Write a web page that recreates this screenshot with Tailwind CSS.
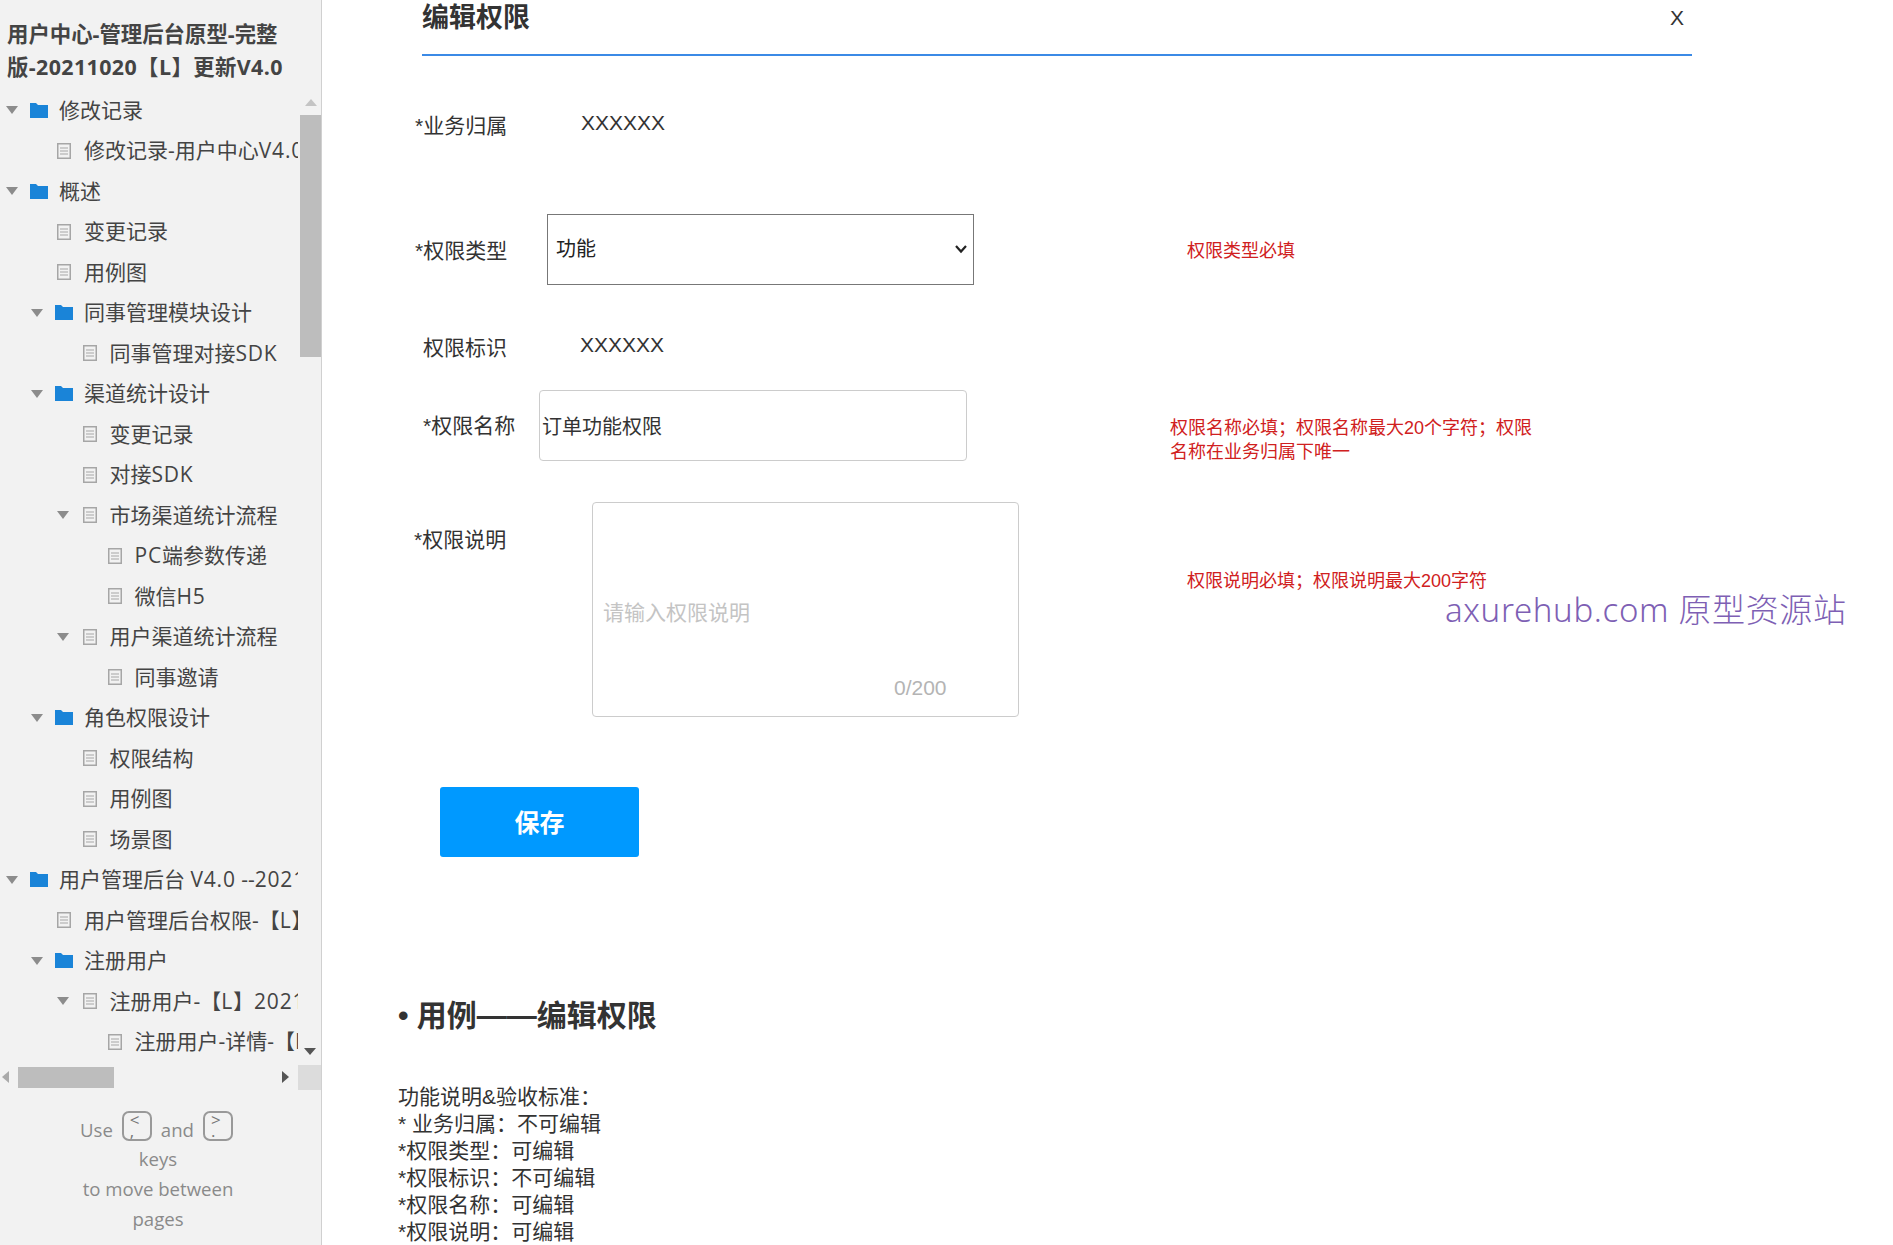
<!DOCTYPE html>
<html lang="en">
<head>
    <meta charset="UTF-8">
    <title>编辑权限</title>
    <script src="https://cdn.jsdelivr.net/npm/@tailwindcss/browser@4"></script>
</head>
<body class="bg-white text-[#333] overflow-hidden font-['Liberation_Sans','Noto_Sans_CJK_SC',sans-serif]">
<div class="flex h-[1245px] w-[1893px] overflow-hidden relative">

    <!-- Sidebar -->
    <aside class="w-[322px] shrink-0 bg-[#f2f2f2] border-r border-[#d0d0d0] font-['Open_Sans','Noto_Sans_CJK_SC',sans-serif]">
        <div class="h-[90px] pt-[17px] pl-[7px] text-[21.4px] leading-[33px] font-bold text-[#444]">
            <div class="whitespace-nowrap">用户中心-管理后台原型-完整</div>
            <div class="whitespace-nowrap tracking-[0.4px]">版-20211020【L】更新V4.0</div>
        </div>

        <!-- Tree -->
        <div class="relative h-[972px]">
            <div id="tree" class="w-[298px] h-full overflow-hidden"></div>
            <div class="absolute top-0 right-0 w-[21px] h-full">
                <svg class="absolute top-[9px] left-[5px]" width="12" height="7" viewBox="0 0 12 7"><path d="M6 0 L12 7 L0 7 Z" fill="#c4c4c4"/></svg>
                <div class="absolute top-[25px] left-0 w-full h-[242px] bg-[#bdbdbd]"></div>
                <svg class="absolute top-[958px] left-[4px]" width="12" height="7" viewBox="0 0 12 7"><path d="M0 0 L12 0 L6 7 Z" fill="#555"/></svg>
            </div>
        </div>

        <!-- Horizontal scrollbar -->
        <div class="relative mt-[3px] h-[26px]">
            <svg class="absolute top-[6px] left-[2px]" width="7" height="12" viewBox="0 0 7 12"><path d="M7 0 L7 12 L0 6 Z" fill="#aaa"/></svg>
            <div class="absolute top-[2px] left-[18px] w-[96px] h-[21px] bg-[#bdbdbd]"></div>
            <svg class="absolute top-[6px] left-[282px]" width="7" height="12" viewBox="0 0 7 12"><path d="M0 0 L7 6 L0 12 Z" fill="#555"/></svg>
            <div class="absolute top-0 right-0 w-[23px] h-[25px] bg-[#dcdcdc]"></div>
        </div>

        <!-- Keyboard hint -->
        <div class="w-[316px] pt-[20px] text-center text-[18.6px] leading-[30px] text-[#8a8a8a]">
            <div class="flex justify-center items-center gap-[9px] h-[33px] pr-[3px]">
                <span class="mt-[4px]">Use</span>
                <span class="w-[30px] h-[30px] overflow-hidden border-2 border-[#999] rounded-[7px] text-[17px] leading-[11px] text-left pl-[6px] pt-[1px] mb-[3px] text-[#777]">&lt;<br>,</span>
                <span class="mt-[4px]">and</span>
                <span class="w-[30px] h-[30px] overflow-hidden border-2 border-[#999] rounded-[7px] text-[17px] leading-[11px] text-left pl-[6px] pt-[1px] mb-[3px] text-[#777]">&gt;<br>.</span>
            </div>
            <div>keys</div>
            <div>to move between</div>
            <div>pages</div>
        </div>
    </aside>

    <!-- Main -->
    <main class="flex-1 text-[21px] leading-[27px]">
        <div class="ml-[100px] w-[1270px] h-[56px] border-b-2 border-[#3b8ae6] flex justify-between items-start">
            <h1 class="text-[27px] leading-[34px] mt-[1px] font-bold text-[#333]">编辑权限</h1>
            <span class="mr-[8px] mt-[4px] text-[#333]">X</span>
        </div>

        <!-- 业务归属 -->
        <div class="ml-[93px] mt-[49px] h-[40px] flex items-center">
            <label class="w-[166px] whitespace-nowrap">*业务归属</label>
            <span class="mb-[6px]">XXXXXX</span>
        </div>

        <!-- 权限类型 -->
        <div class="ml-[93px] mt-[69px] h-[71px] flex items-center">
            <label class="w-[132px] whitespace-nowrap mt-[2px]">*权限类型</label>
            <div class="relative w-[427px] h-[71px]">
                <select class="appearance-none w-full h-full border border-[#777] bg-white pl-[8px] pb-[1px] text-[20px] text-[#222] rounded-none outline-none">
                    <option>功能</option>
                </select>
                <svg class="absolute top-[30px] right-[6px]" width="14" height="10" viewBox="0 0 14 10"><path d="M2 2 L7 7.5 L12 2" fill="none" stroke="#222" stroke-width="2.2"/></svg>
            </div>
            <span class="ml-[213px] mt-[3px] text-[18px] text-[#d02020] whitespace-nowrap">权限类型必填</span>
        </div>

        <!-- 权限标识 -->
        <div class="ml-[101px] mt-[42px] h-[40px] flex items-center">
            <label class="w-[157px] whitespace-nowrap">权限标识</label>
            <span class="mb-[6px]">XXXXXX</span>
        </div>

        <!-- 权限名称 -->
        <div class="ml-[101px] mt-[23px] h-[71px] flex items-center">
            <label class="w-[116px] whitespace-nowrap">*权限名称</label>
            <input type="text" value="订单功能权限" class="w-[428px] h-[71px] border border-[#ccc] rounded-[4px] pl-[2px] text-[20px] text-[#333] outline-none">
            <p class="ml-[203px] mt-[29px] w-[370px] text-[18px] leading-[24px] text-[#d02020]">权限名称必填；权限名称最大20个字符；权限名称在业务归属下唯一</p>
        </div>

        <!-- 权限说明 -->
        <div class="ml-[92px] mt-[41px] h-[215px] flex items-start">
            <label class="w-[178px] pt-[24px] whitespace-nowrap">*权限说明</label>
            <div class="relative w-[427px] h-[215px]">
                <textarea placeholder="请输入权限说明" class="w-full h-full border border-[#ccc] rounded-[4px] pl-[10px] pt-[96px] text-[21px] leading-[27px] resize-none outline-none placeholder:text-[#c4c4c4]"></textarea>
                <span class="absolute left-[302px] top-[172px] text-[#b4b4b4]">0/200</span>
            </div>
            <p class="ml-[168px] mt-[67px] text-[18px] leading-[24px] text-[#d02020] whitespace-nowrap">权限说明必填；权限说明最大200字符</p>
        </div>

        <!-- Save -->
        <button class="block ml-[118px] mt-[70px] w-[199px] h-[70px] pt-[2px] bg-[#0099ff] rounded-[3px] text-white text-[25px] font-bold">保存</button>

        <!-- Use case -->
        <h2 class="ml-[76px] mt-[139px] h-[40px] text-[30px] leading-[40px] font-bold text-[#333] whitespace-nowrap">• 用例——编辑权限</h2>
        <div class="ml-[76px] mt-[47px] whitespace-nowrap text-[#333]">
            <div>功能说明&amp;验收标准：</div>
            <div>* 业务归属：不可编辑</div>
            <div>*权限类型：可编辑</div>
            <div>*权限标识：不可编辑</div>
            <div>*权限名称：可编辑</div>
            <div>*权限说明：可编辑</div>
        </div>
    </main>

    <!-- Watermark -->
    <div class="absolute left-[1445px] top-[588px] text-[33px] leading-[44px] tracking-[0.65px] font-light text-[#7e5fb4] whitespace-nowrap font-['Noto_Sans','Noto_Sans_CJK_SC',sans-serif]">axurehub.com 原型资源站</div>
</div>

<script>
    const indents = ['pl-[5px]', 'pl-[30px]', 'pl-[55.5px]', 'pl-[80.5px]'];

    // [depth, type, has arrow, label]
    const nodes = [
        [0, 'folder', 1, '修改记录'],
        [1, 'page', 0, '修改记录-用户中心V4.0'],
        [0, 'folder', 1, '概述'],
        [1, 'page', 0, '变更记录'],
        [1, 'page', 0, '用例图'],
        [1, 'folder', 1, '同事管理模块设计'],
        [2, 'page', 0, '同事管理对接SDK'],
        [1, 'folder', 1, '渠道统计设计'],
        [2, 'page', 0, '变更记录'],
        [2, 'page', 0, '对接SDK'],
        [2, 'page', 1, '市场渠道统计流程'],
        [3, 'page', 0, 'PC端参数传递'],
        [3, 'page', 0, '微信H5'],
        [2, 'page', 1, '用户渠道统计流程'],
        [3, 'page', 0, '同事邀请'],
        [1, 'folder', 1, '角色权限设计'],
        [2, 'page', 0, '权限结构'],
        [2, 'page', 0, '用例图'],
        [2, 'page', 0, '场景图'],
        [0, 'folder', 1, '用户管理后台 V4.0 --20211020'],
        [1, 'page', 0, '用户管理后台权限-【L】20211020'],
        [1, 'folder', 1, '注册用户'],
        [2, 'page', 1, '注册用户-【L】20211020'],
        [3, 'page', 0, '注册用户-详情-【L】20211020']
    ];

    const arrow = '<svg width="12" height="8" viewBox="0 0 12 8"><path d="M0 0 L12 0 L6 8 Z" fill="#8c8c8c"/></svg>';
    const folder = '<svg width="18" height="15" viewBox="0 0 18 15"><path d="M0 0 H6 L8 2 H18 V15 H0 Z" fill="#1a84d8"/></svg>';
    const page = '<svg width="14" height="16" viewBox="0 0 14 16"><rect x="0.75" y="0.75" width="12.5" height="14.5" fill="none" stroke="#a6a6a6" stroke-width="1.5"/><path d="M3 5 H11 M3 8 H11 M3 11 H11" stroke="#a6a6a6" stroke-width="1.2"/></svg>';

    // latin runs sit a little wider than Open Sans in the reference
    const spaced = label => label.replace(/[A-Za-z0-9.]+/g, run => `<span class="tracking-[0.8px]">${run}</span>`);

    document.getElementById('tree').innerHTML = nodes.map(([depth, type, hasArrow, label]) => `
        <div class="flex items-center h-[40.5px] whitespace-nowrap text-[21px] text-[#444] ${indents[depth]}">
            <span class="w-[14px] shrink-0 flex justify-center">${hasArrow ? arrow : ''}</span>
            <span class="w-[20px] ml-[10px] shrink-0 flex justify-center">${type === 'folder' ? folder : page}</span>
            <span class="ml-[10px]">${spaced(label)}</span>
        </div>`).join('');
</script>
</body>
</html>
